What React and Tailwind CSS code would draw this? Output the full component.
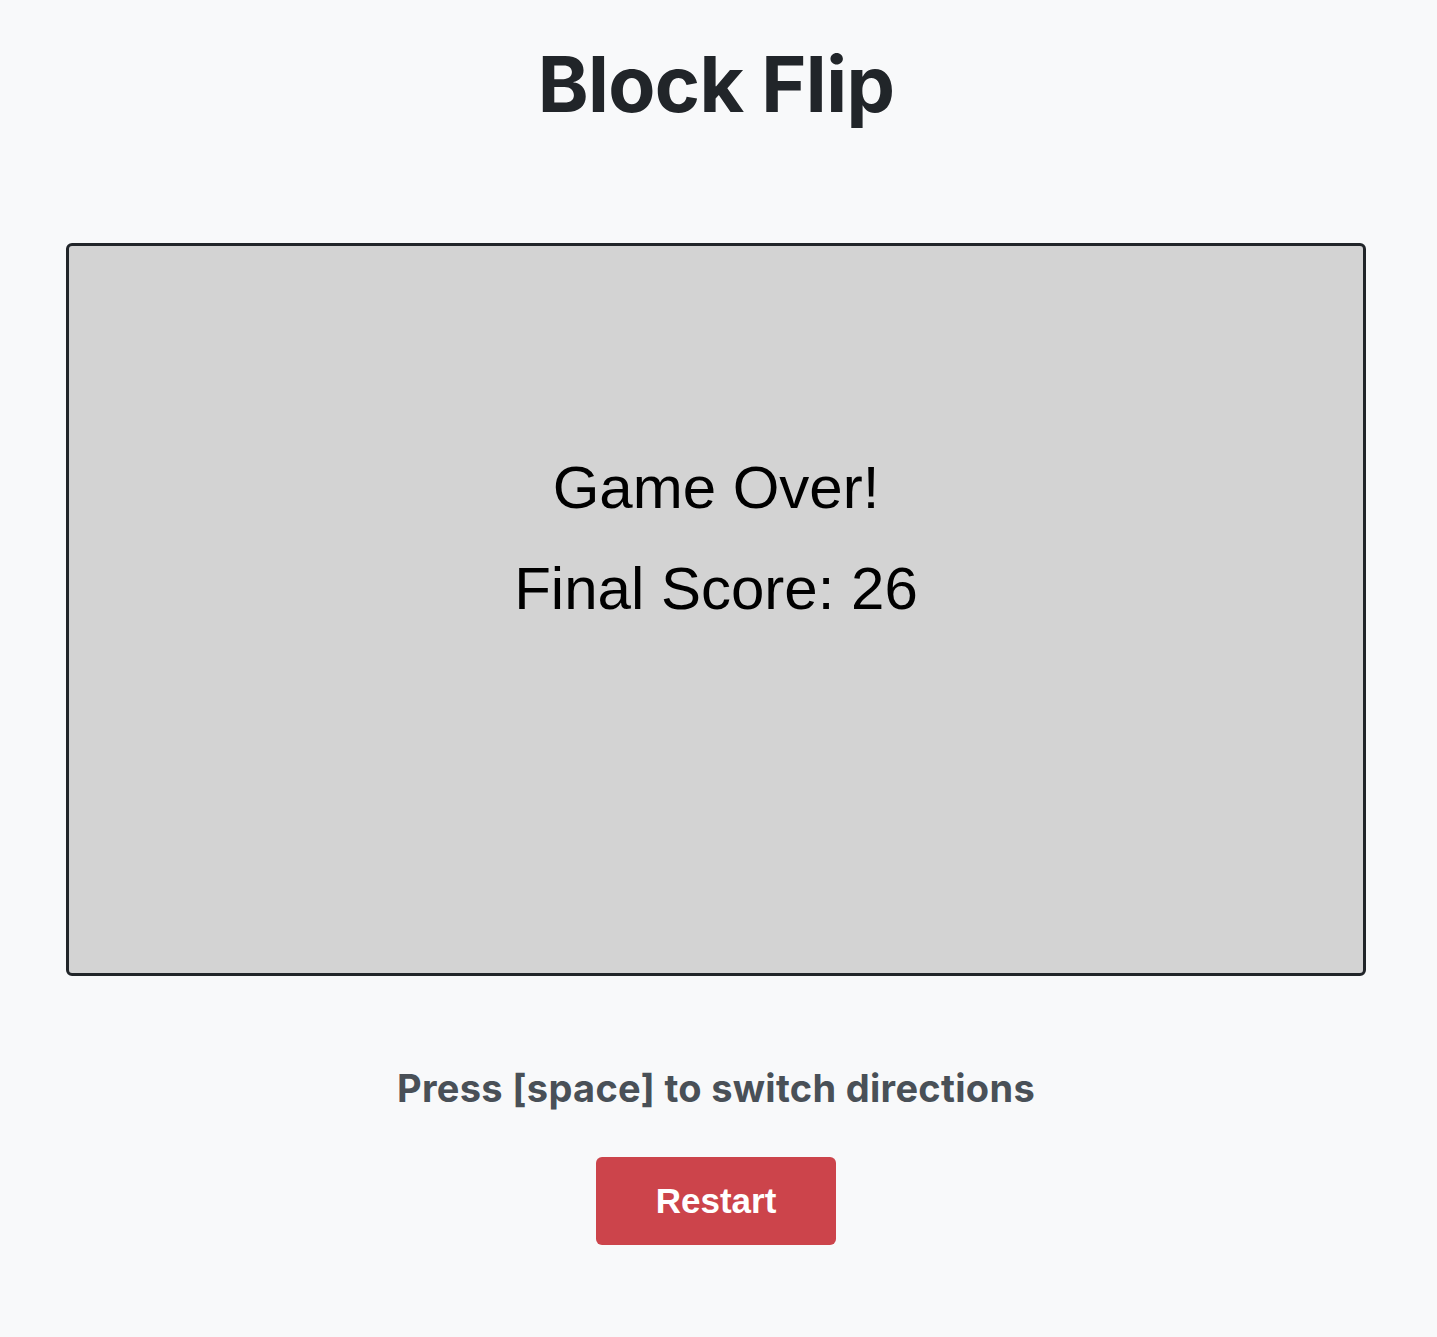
export default function App() {
  return (
    <div className="min-h-[1337px] bg-[#f8f9fa] flex flex-col items-center pr-[5px] font-['Inter',sans-serif]">
      <h1 className="mt-[38px] text-[77px] leading-[1.2] font-bold text-[#212529] tracking-[-0.6px]">Block Flip</h1>

      <div className="mt-[113px] w-[1300px] h-[733px] rounded-[6px] border-[3px] border-[#212529] bg-[#d3d3d3] flex flex-col items-center pt-[200px] font-['Liberation_Sans',Arial,sans-serif] text-[60px] leading-none text-black">
        <p className="mt-[12px]">Game Over!</p>
        <p className="mt-[41px]">Final Score: 26</p>
      </div>

      <p className="mt-[85px] text-[38px] leading-[1.45] font-bold tracking-[0.3px] text-[#495057]">Press [space] to switch directions</p>

      <button className="mt-[41px] w-[240px] h-[88px] rounded-[6px] bg-[#cc444b] text-white text-[35px] font-bold font-['Liberation_Sans',Arial,sans-serif]">
        Restart
      </button>
    </div>
  );
}
